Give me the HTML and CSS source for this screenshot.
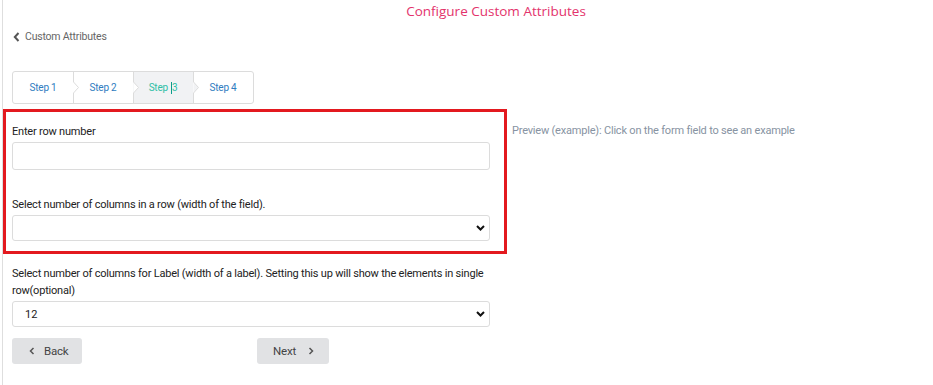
FILE: index.html
```html
<!DOCTYPE html>
<html lang="en">
<head>
  <meta charset="UTF-8">
  <title>Configure Custom Attributes</title>
  <link rel="stylesheet" href="styles.css">
</head>
<body>

  <div class="page">
    <h1 class="page-title">Configure Custom Attributes</h1>

    <a class="back-link" href="#">
      <svg width="7" height="10" viewBox="0 0 7 10"><path d="M5.5 1 L1.8 5 L5.5 9" fill="none" stroke="#555" stroke-width="2"/></svg>
      Custom Attributes
    </a>

    <div class="steps">
      <div class="step">Step 1</div>
      <div class="step">
        <svg class="sep" width="7" height="31" viewBox="0 0 7 31"><path d="M0.5 0 V10 L5.5 15.5 L0.5 21 V31" fill="none" stroke="#dcdcdc"/></svg>
        Step 2
      </div>
      <div class="step active">
        <svg class="sep" width="7" height="31" viewBox="0 0 7 31"><path d="M0.5 0 V10 L5.5 15.5 L0.5 21 V31" fill="#fff" stroke="#dcdcdc"/></svg>
        Step <span class="caret"></span>3
      </div>
      <div class="step">
        <svg class="sep" width="7" height="31" viewBox="0 0 7 31"><path d="M0.5 0 V10 L5.5 15.5 L0.5 21 V31" fill="#f1f2f4" stroke="#dcdcdc"/></svg>
        Step 4
      </div>
    </div>

    <div class="workspace">
      <div class="form-col">
        <div class="highlight">
          <div class="field">
            <label>Enter row number</label>
            <input type="text" class="control">
          </div>
          <div class="field">
            <label>Select number of columns in a row (width of the field).</label>
            <div class="select-wrap">
              <select class="control"><option></option></select>
              <svg class="select-arrow" width="9" height="6" viewBox="0 0 9 6"><path d="M1 1 L4.5 4.5 L8 1" fill="none" stroke="#111" stroke-width="2"/></svg>
            </div>
          </div>
        </div>

        <div class="field field-plain">
          <label>Select number of columns for Label (width of a label). Setting this up will show the elements in single row(optional)</label>
          <div class="select-wrap">
            <select class="control"><option>12</option></select>
            <svg class="select-arrow" width="9" height="6" viewBox="0 0 9 6"><path d="M1 1 L4.5 4.5 L8 1" fill="none" stroke="#111" stroke-width="2"/></svg>
          </div>
        </div>

        <div class="actions">
          <button class="btn">
            <svg width="6" height="8" viewBox="0 0 6 8"><path d="M4.5 1 L1.5 4 L4.5 7" fill="none" stroke="#555" stroke-width="1.5"/></svg>
            Back
          </button>
          <button class="btn btn-next">
            Next
            <svg width="6" height="8" viewBox="0 0 6 8"><path d="M1.5 1 L4.5 4 L1.5 7" fill="none" stroke="#555" stroke-width="1.5"/></svg>
          </button>
        </div>
      </div>

      <div class="preview">Preview (example): Click on the form field to see an example</div>
    </div>
  </div>

</body>
</html>
```

FILE: styles.css
```css
body {
  margin: 0;
  font-family: Roboto, "Liberation Sans", sans-serif;
  font-size: 11px;
  letter-spacing: -0.2px;
  color: #222;
  background: #fff;
}

.page {
  margin-left: 2px;
  border-left: 1px solid #dedede;
  min-height: 385px;
}

.page-title {
  margin: 0;
  padding: 2px 0 0 56px;
  font-family: "Open Sans", sans-serif;
  font-weight: normal;
  font-size: 13.5px;
  line-height: 18px;
  letter-spacing: 0;
  text-align: center;
  color: #e3336c;
}

.back-link {
  display: flex;
  align-items: center;
  gap: 5px;
  margin: 10px 0 0 10px;
  color: #666;
  text-decoration: none;
  font-size: 10.5px;
  line-height: 14px;
}

.steps {
  display: flex;
  width: 240px;
  height: 31px;
  margin: 27px 0 0 9px;
  border: 1px solid #dcdcdc;
  border-radius: 3px;
}

.step {
  position: relative;
  flex: 1;
  display: flex;
  align-items: center;
  justify-content: center;
  color: #2f7cc0;
  font-size: 10px;
}

.step.active {
  background: #f1f2f4;
  color: #2fbfa6;
}

.step .sep {
  position: absolute;
  left: 0;
  top: 0;
}

.caret {
  display: inline-block;
  width: 1px;
  height: 12px;
  margin-left: 3px;
  background: #0b9d8c;
}

.workspace {
  display: flex;
  margin-top: 5px;
}

.form-col {
  width: 504px;
}

.highlight {
  border: 3px solid #e3191f;
  padding: 11px 14px 10px 6px;
}

.field label {
  display: block;
  line-height: 17px;
  margin-bottom: 2px;
}

.field + .field {
  margin-top: 26px;
}

.field-plain {
  margin: 11px 17px 0 9px;
}

.control {
  display: block;
  box-sizing: border-box;
  width: 100%;
  height: 28px;
  border: 1px solid #dcdcdc;
  border-radius: 3px;
  background: #fff;
  font-family: Roboto, "Liberation Sans", sans-serif;
  font-size: 11px;
  color: #222;
  padding: 0 12px;
  appearance: none;
  -webkit-appearance: none;
}

.select-wrap {
  position: relative;
}

.select-wrap .control {
  height: 26px;
}

.select-arrow {
  position: absolute;
  right: 5px;
  top: 10px;
}

.actions {
  display: flex;
  gap: 175px;
  margin: 11px 0 0 9px;
}

.btn {
  display: flex;
  align-items: center;
  gap: 9px;
  width: 70px;
  height: 26px;
  padding: 0 0 0 17px;
  border: none;
  border-radius: 3px;
  background: #e1e2e4;
  font-family: Roboto, "Liberation Sans", sans-serif;
  font-size: 11.5px;
  letter-spacing: -0.2px;
  color: #444;
}

.btn-next {
  width: 72px;
  padding: 0 0 0 16px;
  gap: 12px;
}

.preview {
  margin: 15px 0 0 5px;
  color: #8793a2;
  line-height: 14px;
}
```
